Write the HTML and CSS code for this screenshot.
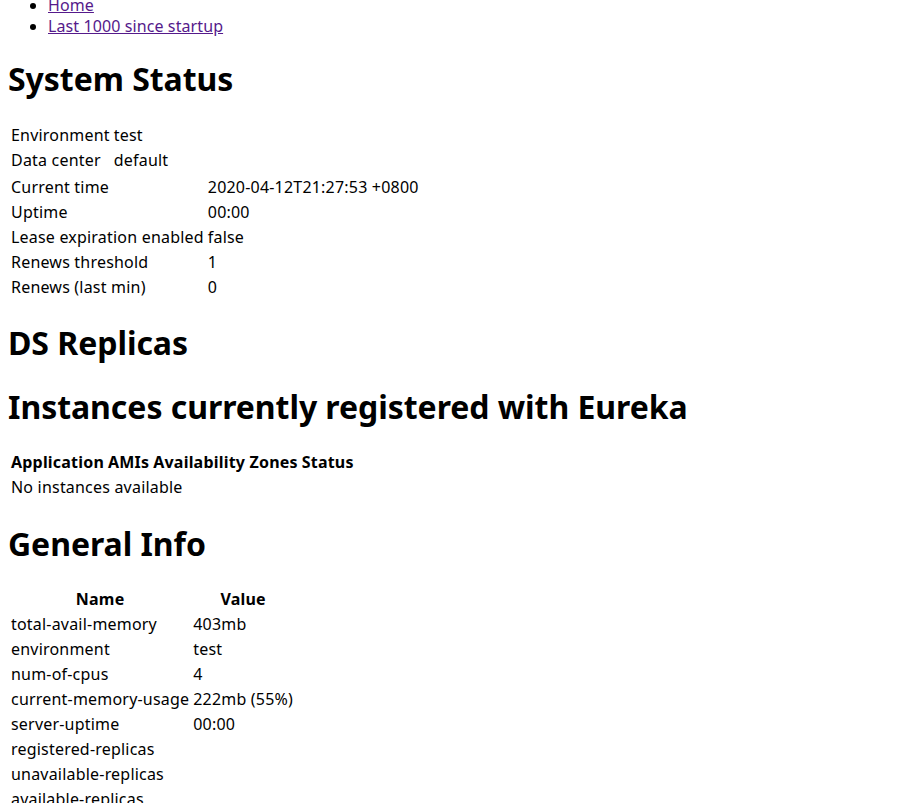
FILE: index.html
```html
<!DOCTYPE html>
<html>
<head>
<meta charset="utf-8">
<title>Eureka</title>
<link rel="stylesheet" href="styles.css">
</head>
<body>
<ul class="nav">
  <li><a class="link" href="#home">Home</a></li>
  <li><a class="link" href="#last">Last 1000 since startup</a></li>
</ul>
<h1 class="title">System Status</h1>
<div class="row">
  <div class="col">
    <table class="table">
      <tr><td>Environment</td><td>test</td></tr>
      <tr><td>Data center</td><td>default</td></tr>
    </table>
  </div>
  <div class="col">
    <table class="table">
      <tr><td>Current time</td><td>2020-04-12T21:27:53 +0800</td></tr>
      <tr><td>Uptime</td><td>00:00</td></tr>
      <tr><td>Lease expiration enabled</td><td>false</td></tr>
      <tr><td>Renews threshold</td><td>1</td></tr>
      <tr><td>Renews (last min)</td><td>0</td></tr>
    </table>
  </div>
</div>
<h1 class="title">DS Replicas</h1>
<h1 class="title">Instances currently registered with Eureka</h1>
<table class="table">
  <thead>
    <tr><th>Application</th><th>AMIs</th><th>Availability Zones</th><th>Status</th></tr>
  </thead>
  <tbody>
    <tr><td colspan="4">No instances available</td></tr>
  </tbody>
</table>
<h1 class="title">General Info</h1>
<table class="table">
  <thead>
    <tr><th>Name</th><th>Value</th></tr>
  </thead>
  <tbody>
    <tr><td>total-avail-memory</td><td>403mb</td></tr>
    <tr><td>environment</td><td>test</td></tr>
    <tr><td>num-of-cpus</td><td>4</td></tr>
    <tr><td>current-memory-usage</td><td>222mb (55%)</td></tr>
    <tr><td>server-uptime</td><td>00:00</td></tr>
    <tr><td>registered-replicas</td><td></td></tr>
    <tr><td>unavailable-replicas</td><td></td></tr>
    <tr><td>available-replicas</td><td></td></tr>
  </tbody>
</table>
</body>
</html>
```
FILE: styles.css
```css
html, body {
  background: #ffffff;
}
body {
  margin: 0 8px 8px;
  font-family: "Noto Sans", "Noto Sans CJK SC", sans-serif;
  font-size: 16px;
  line-height: 21px;
  color: #000000;
}
.nav {
  margin: -5px 0 16px;
  padding-left: 40px;
  letter-spacing: 0.1px;
}
.link {
  color: #551a8b;
}
.title {
  font-size: 32px;
  line-height: 42px;
  font-weight: bold;
  margin: 21.44px 0;
  letter-spacing: -0.05px;
}
.table {
  border-spacing: 2px;
}
.table td, .table th {
  padding: 1px;
  letter-spacing: 0.2px;
}
.table th {
  font-weight: bold;
}
```
